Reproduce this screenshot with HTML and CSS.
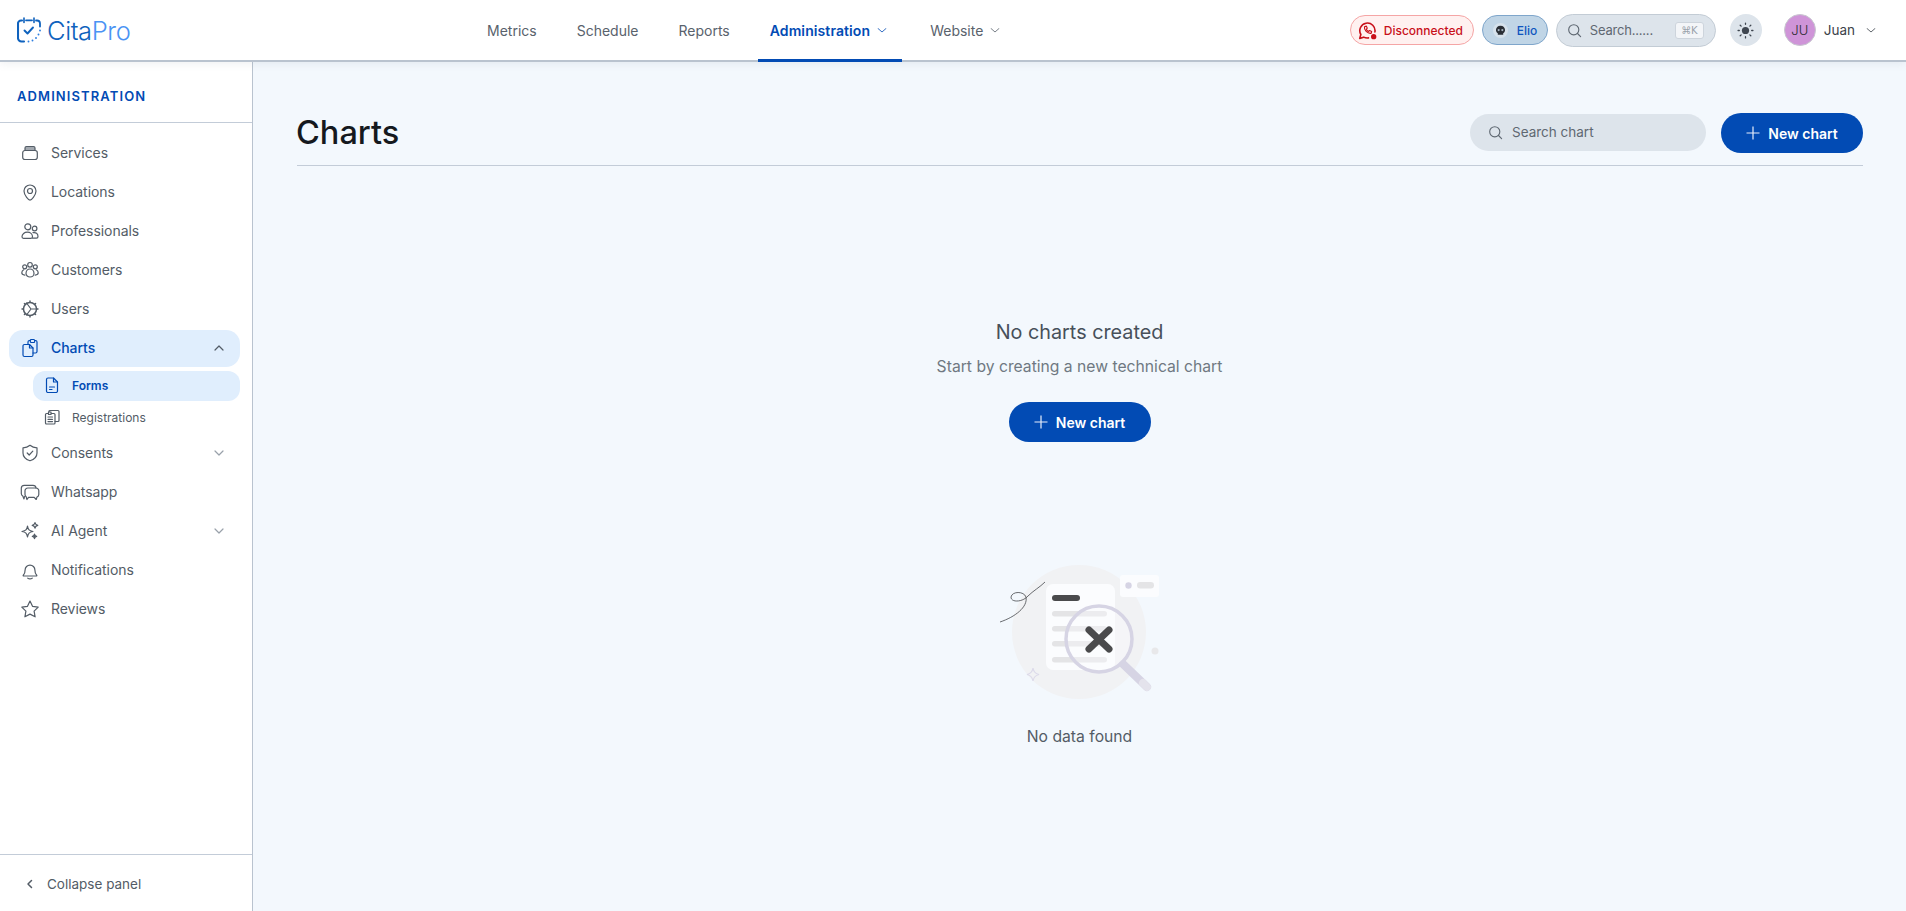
FILE: index.html
```html
<!DOCTYPE html>
<html lang="en">
<head>
    <meta charset="UTF-8">
    <meta name="viewport" content="width=device-width, initial-scale=1.0">
    <title>CitaPro - Charts</title>
    <link rel="stylesheet" href="styles.css">
</head>
<body>
    <header class="topbar">
        <a class="brand" href="#">
            <svg class="brand-icon" viewBox="0 0 24 26" fill="none" stroke="#0f62bd" stroke-width="2.100" stroke-linecap="round" stroke-linejoin="round">
                <path d="M5 3.500H4A3 3 0 0 0 1 6.500V21a3.500 3.500 0 0 0 3.500 3.500H7"/>
                <path d="M9 3.300h6M19 3.500h1A3 3 0 0 1 23 6.500v3" stroke-width="1.800"/>
                <path d="M7 1v4.500M17 1v4.500" stroke-width="1.600"/>
                <path d="M7.500 13.500l3 3 5.500-6" stroke-width="1.900"/>
                <path d="M11.500 24.500h.01M15.500 23.500h.01M19 21h.01M21.500 17.500h.01M23 13.500h.01" stroke-width="1.900" stroke="#2f7fe0"/>
            </svg>
            <span class="brand-name">Cita<span class="brand-pro">Pro</span></span>
        </a>
        <nav class="main-nav">
            <a class="main-link" href="#">Metrics</a>
            <a class="main-link" href="#">Schedule</a>
            <a class="main-link" href="#">Reports</a>
            <a class="main-link active" href="#">Administration
                <svg class="caret" viewBox="0 0 12 12" fill="none" stroke="currentColor" stroke-width="1" stroke-linecap="round" stroke-linejoin="round"><path d="M2 4.500L6 8l4-3.500"/></svg>
            </a>
            <a class="main-link" href="#">Website
                <svg class="caret" viewBox="0 0 12 12" fill="none" stroke="currentColor" stroke-width="1" stroke-linecap="round" stroke-linejoin="round"><path d="M2 4.500L6 8l4-3.500"/></svg>
            </a>
        </nav>
        <div class="top-actions">
            <span class="pill pill-off">
                <svg class="pill-icon" viewBox="0 0 20 20" fill="none" stroke="#c8101a" stroke-width="1.700" stroke-linecap="round" stroke-linejoin="round">
                    <path d="M11 17.800A8 8 0 0 1 6 17L1.800 18.300 3 14.200A8 8 0 1 1 17.800 11.500"/>
                    <path d="M6.800 6c-.6 3.500 3 7.500 7 7l.6-2-2.200-1-1 1c-1.100-.5-1.900-1.300-2.400-2.400l1-1-1-2.200z" stroke-width="1.200"/>
                    <circle cx="16.500" cy="16.500" r="2.800" fill="#c8101a" stroke="none"/>
                </svg>
                Disconnected
            </span>
            <span class="pill pill-agent">
                <span class="agent-face">
                    <svg viewBox="0 0 12 12"><path d="M6 1.500c-2.600 0-4.200 1.800-4.200 4 0 1.500.8 2.500 1.700 3v1.500h5V8.500c.9-.5 1.700-1.500 1.700-3 0-2.200-1.600-4-4.200-4z" fill="#2a2f36"/><circle cx="4.300" cy="5.600" r="1" fill="#a9b6c2"/><circle cx="7.700" cy="5.600" r="1" fill="#a9b6c2"/></svg>
                </span>
                Elio
            </span>
            <label class="top-search">
                <svg class="search-icon" viewBox="0 0 16 16" fill="none" stroke="currentColor" stroke-width="1.200" stroke-linecap="round"><circle cx="7.200" cy="7.200" r="5.400"/><path d="M11.200 11.200l3.300 3.300"/></svg>
                <span class="top-search-text">Search......</span>
                <kbd class="shortcut">⌘K</kbd>
            </label>
            <button class="theme-btn" type="button" aria-label="Theme">
                <svg viewBox="0 0 16 16" fill="#3f4650" stroke="#3f4650" stroke-width="1.200" stroke-linecap="round"><circle cx="8" cy="8" r="3.400" stroke="none"/><path d="M8 1v1.200M8 13.800V15M1 8h1.200M13.800 8H15M3 3l.9.9M12.100 12.100l.9.9M3 13l.9-.9M12.100 3.900L13 3"/></svg>
            </button>
            <div class="user">
                <span class="avatar">JU</span>
                <span class="user-name">Juan</span>
                <svg class="caret" viewBox="0 0 12 12" fill="none" stroke="currentColor" stroke-width="1" stroke-linecap="round" stroke-linejoin="round"><path d="M2 4.500L6 8l4-3.500"/></svg>
            </div>
        </div>
    </header>

    <div class="layout">
        <aside class="sidebar">
            <div class="side-title">ADMINISTRATION</div>
            <nav class="side-nav">
                <a class="side-item" href="#">
                    <svg class="side-icon" viewBox="0 0 20 20"><path d="M5 7.500V5a1.500 1.500 0 0 1 1.500-1.500h7A1.500 1.500 0 0 1 15 5v2.500z" fill="#a3a9b0"/><rect x="2.700" y="7.500" width="14.600" height="9" rx="2.200"/></svg>
                    Services
                </a>
                <a class="side-item" href="#">
                    <svg class="side-icon" viewBox="0 0 20 20"><path d="M10 18.200c-1 0-6-4.700-6-9.200a6 6 0 1 1 12 0c0 4.500-5 9.200-6 9.200z"/><circle cx="10" cy="9" r="2.500"/></svg>
                    Locations
                </a>
                <a class="side-item" href="#">
                    <svg class="side-icon" viewBox="0 0 20 20"><circle cx="7.800" cy="5.800" r="3"/><circle cx="14.600" cy="7.500" r="2.300"/><path d="M2 15.800c0-2.700 2.500-4.600 5.300-4.600 2.900 0 5.200 1.900 5.200 4.600 0 1-.6 1.500-1.500 1.500H3.500c-.9 0-1.500-.5-1.500-1.500z"/><path d="M13 11.700c2.800-.7 5 .9 5 3.700 0 1-.6 1.700-1.500 1.700h-4"/></svg>
                    Professionals
                </a>
                <a class="side-item" href="#">
                    <svg class="side-icon" viewBox="0 0 20 20"><circle cx="10" cy="4.800" r="2.300"/><circle cx="4.700" cy="6.800" r="2"/><circle cx="15.300" cy="6.800" r="2"/><path d="M6 13.500c0-2.600 1.800-4.500 4-4.500s4 1.900 4 4.500c0 2-1.800 3.500-4 3.500s-4-1.500-4-3.500z"/><path d="M3.700 9.800C2.500 10.400 1.800 11.500 1.800 12.800c0 1.200 1 2.100 3 2.300M16.300 9.800c1.200.6 1.900 1.700 1.900 3 0 1.200-1 2.100-3 2.300"/></svg>
                    Customers
                </a>
                <a class="side-item" href="#">
                    <svg class="side-icon" viewBox="0 0 20 20"><circle cx="10" cy="10" r="6.500" stroke-width="1.500"/><path d="M10 2v1.200M10 16.800V18M2 10h1.200M16.800 10H18M4.400 4.400l.9.9M14.700 14.700l.9.900M4.400 15.600l.9-.9M14.700 5.300l.9-.9" stroke-width="1.400"/><path d="M6.500 4L11 10l-4.500 6M11 10h5.500"/></svg>
                    Users
                </a>
                <a class="side-item active" href="#">
                    <svg class="side-icon" viewBox="0 0 20 20"><path d="M4.500 6.500h5L13 10v7a1.500 1.500 0 0 1-1.500 1.500h-7A1.500 1.500 0 0 1 3 17V8a1.500 1.500 0 0 1 1.500-1.500z"/><path d="M8 6.500V4A1.500 1.500 0 0 1 9.500 2.500h6A1.500 1.500 0 0 1 17 4v9.500a1.500 1.500 0 0 1-1.500 1.500H13"/><rect x="10.300" y="1.500" width="4.400" height="3" rx="1" fill="#e0eefd"/><path d="M9.500 6.500V10H13"/></svg>
                    Charts
                    <svg class="side-caret" viewBox="0 0 14 14"><path d="M3 9l4-4 4 4"/></svg>
                </a>
                <div class="side-sub">
                    <a class="sub-item active" href="#">
                        <svg class="sub-icon" viewBox="0 0 16 16"><path d="M2.500 2.500A1.500 1.500 0 0 1 4 1h5.500l4 4v9a1.500 1.500 0 0 1-1.500 1.500H4A1.500 1.500 0 0 1 2.500 14z"/><path d="M9.500 1v4h4M5.500 10h5M5.500 12.500h2.500"/></svg>
                        Forms
                    </a>
                    <a class="sub-item" href="#">
                        <svg class="sub-icon" viewBox="0 0 16 16"><rect x="1.500" y="4.500" width="9.500" height="10.500" rx="1"/><path d="M5 4.500V2.500a1 1 0 0 1 1-1h8a1 1 0 0 1 1 1V11.500a1 1 0 0 1-1 1h-3M4 8h4.500M4 10.300h4.500M4 12.600h4.500"/><rect x="4.500" y="3" width="2.500" height="2.500" fill="#fff"/></svg>
                        Registrations
                    </a>
                </div>
                <a class="side-item" href="#">
                    <svg class="side-icon" viewBox="0 0 20 20"><path d="M10 2.300c2 1.600 4.500 2.400 7 2.500V10c0 3.900-3 6.500-7 7.800C6 16.500 3 13.900 3 10V4.800c2.500-.1 5-.9 7-2.500z"/><path d="M7.200 10l2 2 3.600-3.800"/></svg>
                    Consents
                    <svg class="side-caret" viewBox="0 0 14 14"><path d="M3 5l4 4 4-4"/></svg>
                </a>
                <a class="side-item" href="#">
                    <svg class="side-icon" viewBox="0 0 20 20"><path d="M5 14.500H4.500L4 17l-1.200-3C1.900 13.500 1.300 12.600 1.300 11.500V6.300A3 3 0 0 1 4.300 3.300H13A3 3 0 0 1 16 6"/><path d="M8.500 6h7.500A2.800 2.800 0 0 1 18.800 8.800v3.700A2.800 2.800 0 0 1 17 15l-.8 2.500-2-2.200H8.500L7 17.500l-.8-2.700A2.800 2.800 0 0 1 5 12.500V8.800A2.800 2.800 0 0 1 7.800 6z"/></svg>
                    Whatsapp
                </a>
                <a class="side-item" href="#">
                    <svg class="side-icon" viewBox="0 0 20 20"><path d="M7.500 5c.6 3.800 1.700 4.900 5.500 5.500-3.800.6-4.900 1.700-5.500 5.500-.6-3.800-1.700-4.900-5.500-5.500C5.800 9.900 6.900 8.800 7.500 5z"/><path d="M15 1.500c.3 1.800.9 2.400 2.800 2.800-1.900.4-2.500 1-2.800 2.800-.3-1.800-.9-2.400-2.800-2.800 1.900-.4 2.500-1 2.800-2.800z"/><path d="M14.500 13c.3 1.500.8 2 2.200 2.300-1.400.3-1.900.8-2.200 2.300-.3-1.500-.8-2-2.200-2.300 1.400-.3 1.900-.8 2.200-2.300z" fill="currentColor"/></svg>
                    AI Agent
                    <svg class="side-caret" viewBox="0 0 14 14"><path d="M3 5l4 4 4-4"/></svg>
                </a>
                <a class="side-item" href="#">
                    <svg class="side-icon" viewBox="0 0 20 20"><path d="M3.300 15.200c1.300-1.200 1.800-2.500 1.800-5.200a4.900 4.900 0 0 1 9.800 0c0 2.700.5 4 1.800 5.200.3.300.1.800-.3.800H3.600c-.4 0-.6-.5-.3-.8z"/><path d="M7.800 18.200c.6.400 1.400.6 2.200.6s1.600-.2 2.200-.6"/></svg>
                    Notifications
                </a>
                <a class="side-item" href="#">
                    <svg class="side-icon" viewBox="0 0 20 20"><path d="M10 2l2.500 5.300 5.700.8-4.100 4 1 5.700-5.100-2.700-5.100 2.700 1-5.700-4.100-4 5.700-.8z"/></svg>
                    Reviews
                </a>
            </nav>
            <a class="collapse" href="#">
                <svg class="collapse-icon" viewBox="0 0 12 12"><path d="M7.500 2.500L4 6l3.500 3.500"/></svg>
                Collapse panel
            </a>
        </aside>

        <main class="content">
            <div class="page-head">
                <h1 class="page-title">Charts</h1>
                <label class="chart-search">
                    <svg class="search-icon" viewBox="0 0 16 16" fill="none" stroke="currentColor" stroke-width="1.200" stroke-linecap="round"><circle cx="7.200" cy="7.200" r="5.400"/><path d="M11.200 11.200l3.300 3.300"/></svg>
                    <span>Search chart</span>
                </label>
                <button class="primary-btn" type="button">
                    <svg class="plus" viewBox="0 0 14 14"><path d="M7 .5v13M.5 7h13"/></svg>
                    New chart
                </button>
            </div>

            <section class="empty">
                <h2 class="empty-title">No charts created</h2>
                <p class="empty-text">Start by creating a new technical chart</p>
                <button class="primary-btn" type="button">
                    <svg class="plus" viewBox="0 0 14 14"><path d="M7 .5v13M.5 7h13"/></svg>
                    New chart
                </button>
                <svg class="empty-art" viewBox="40 25 160 135" fill="none">
                    <circle cx="119" cy="93" r="67" fill="#f1f2f4"/>
                    <rect x="86" y="45" width="69" height="86" rx="7" fill="#fbfcfe"/>
                    <rect x="92" y="56" width="28" height="6" rx="3" fill="#4a4a4c"/>
                    <rect x="92" y="72" width="55" height="5.500" rx="2.700" fill="#e4e4e6"/>
                    <rect x="92" y="87" width="55" height="5.500" rx="2.700" fill="#e4e4e6"/>
                    <rect x="92" y="102" width="55" height="5.500" rx="2.700" fill="#e4e4e6"/>
                    <rect x="92" y="118" width="55" height="5.500" rx="2.700" fill="#e4e4e6"/>
                    <path d="M163 125l24 23" stroke="#d6d4e4" stroke-width="8" stroke-linecap="round"/>
                    <path d="M183 144l4 4" stroke="#e4e3ec" stroke-width="8" stroke-linecap="round"/>
                    <circle cx="139" cy="100" r="33" fill="#fbfcfe" fill-opacity=".35" stroke="#d6d4e4" stroke-width="3.500"/>
                    <path d="M129 91l20 19M149 91l-20 19" stroke="#4a4a4c" stroke-width="7" stroke-linecap="round"/>
                    <rect x="160" y="36" width="39" height="22" rx="3" fill="#fbfcfe"/>
                    <circle cx="168.500" cy="46.500" r="3.200" fill="#d6d4e4"/>
                    <rect x="177" y="43" width="17" height="6.500" rx="3.200" fill="#e4e4e6"/>
                    <circle cx="195" cy="112" r="3.500" fill="#e8e8ea"/>
                    <path d="M73 129c.6 4 2 5.500 6 6.500-4 1-5.400 2.500-6 6.500-.6-4-2-5.500-6-6.500 4-1 5.400-2.500 6-6.500z" stroke="#dcdaea" stroke-width="1.200"/>
                    <path d="M40 83C55 78 68 68 66 58 64 52 52 52 51 58 51 64 63 63 68 57 73 52 80 48 85 43" stroke="#45474b" stroke-width=".8"/>
                </svg>
                <p class="empty-note">No data found</p>
            </section>
        </main>
    </div>
</body>
</html>
```

FILE: styles.css
```css
* {
    box-sizing: border-box;
}

html,
body {
    height: 100%;
}

body {
    margin: 0;
    display: flex;
    flex-direction: column;
    overflow: hidden;
    font-family: "Inter", "Noto Sans", sans-serif;
    color: #535c66;
    background: #f3f8fd;
}

a {
    color: inherit;
    text-decoration: none;
}

/* top bar */
.topbar {
    position: relative;
    z-index: 1;
    display: flex;
    align-items: stretch;
    flex: none;
    height: 62px;
    padding: 0 29px 0 17px;
    background: #fff;
    border-bottom: 2px solid #b9c3cf;
    box-shadow: 0 2px 8px rgba(100, 116, 139, .1);
}

.brand {
    display: flex;
    align-items: center;
    gap: 6px;
    width: 458px;
}

.brand-icon {
    width: 24px;
    height: 26px;
}

.brand-name {
    font-size: 25.500px;
    font-weight: 300;
    color: #0f62bd;
    letter-spacing: -0.4px;
}

.brand-pro {
    color: #4a93f4;
}

.main-nav {
    display: flex;
    gap: 16px;
    margin-bottom: -2px;
}

.main-link {
    display: flex;
    align-items: center;
    gap: 6px;
    padding: 1px 12px 0;
    font-size: 14px;
    color: #59626c;
    border-bottom: 3px solid transparent;
}

.main-link.active {
    font-weight: 600;
    letter-spacing: .1px;
    color: #024bb4;
    border-bottom-color: #024bb4;
}

.main-link .caret {
    margin-right: 2px;
}

.caret {
    width: 12px;
    height: 12px;
    flex: none;
    opacity: .8;
}

.top-actions {
    display: flex;
    align-items: center;
    margin-left: auto;
}

.pill {
    display: flex;
    align-items: center;
    height: 30px;
    border-radius: 15px;
    font-size: 12px;
    font-weight: 500;
}

.pill-off {
    gap: 7px;
    width: 124px;
    padding-left: 7px;
    color: #c8101a;
    background: #fff1f0;
    border: 1px solid #f5a5a5;
}

.pill-icon {
    width: 19px;
    height: 19px;
    flex: none;
}

.pill-agent {
    gap: 9px;
    width: 66px;
    margin-left: 8px;
    padding-left: 10px;
    color: #0f55bf;
    background: #c0d5e6;
    border: 1px solid #7fa6cb;
}

.agent-face {
    display: flex;
    align-items: center;
    justify-content: center;
    width: 15px;
    height: 15px;
    background: #d6e2ec;
    border-radius: 50%;
}

.agent-face svg {
    width: 13px;
    height: 13px;
}

.top-search {
    display: flex;
    align-items: center;
    width: 160px;
    height: 33px;
    margin-left: 8px;
    padding: 0 11px 0 10px;
    font-size: 13px;
    letter-spacing: -0.2px;
    color: #5f6872;
    background: #dde4eb;
    border: 1px solid #c3ccd5;
    border-radius: 17px;
}

.search-icon {
    width: 15px;
    height: 15px;
    flex: none;
}

.top-search-text {
    margin-left: 8px;
}

.shortcut {
    display: flex;
    align-items: center;
    justify-content: center;
    width: 29px;
    height: 17px;
    margin-left: auto;
    font-family: "DejaVu Sans", sans-serif;
    font-size: 10px;
    color: #9aa2ab;
    background: #f3f5f8;
    border: 1px solid #cdd4dc;
    border-radius: 3px;
}

.theme-btn {
    display: flex;
    align-items: center;
    justify-content: center;
    width: 32px;
    height: 32px;
    margin-left: 14px;
    padding: 0;
    background: #dde4eb;
    border: 0;
    border-radius: 50%;
}

.theme-btn svg {
    width: 17px;
    height: 17px;
}

.user {
    display: flex;
    align-items: center;
    margin-left: 22px;
    font-size: 13.500px;
    color: #3b424a;
}

.avatar {
    display: flex;
    align-items: center;
    justify-content: center;
    width: 32px;
    height: 32px;
    border: 1px solid #c8c8d0;
    border-radius: 50%;
    font-size: 13px;
    font-weight: 300;
    color: #2b2b2f;
    background: #cf94d8;
}

.user-name {
    margin: 0 10px 0 8px;
}

/* page layout */
.layout {
    display: flex;
    flex: 1;
    min-height: 0;
}

.sidebar {
    display: flex;
    flex-direction: column;
    flex: none;
    width: 253px;
    background: #fff;
    border-right: 1px solid #b9c3cf;
}

.side-title {
    height: 61px;
    padding: 25px 0 0 17px;
    font-size: 13px;
    font-weight: 600;
    letter-spacing: 1.100px;
    line-height: 18px;
    color: #024bb4;
    border-bottom: 1px solid #c3ccd8;
}

.side-nav {
    display: flex;
    flex-direction: column;
    gap: 2px;
    flex: 1;
    padding-top: 12px;
}

.side-item {
    display: flex;
    align-items: center;
    gap: 11px;
    flex: none;
    height: 37px;
    margin: 0 12px 0 9px;
    padding: 0 14px 2px 11px;
    font-size: 14px;
    letter-spacing: -0.05px;
    border-radius: 14px;
}

.side-item.active {
    font-weight: 500;
    color: #024bb4;
    background: #e0eefd;
}

.side-icon,
.sub-icon {
    flex: none;
    fill: none;
    stroke: currentColor;
    stroke-width: 1.200;
    stroke-linecap: round;
    stroke-linejoin: round;
}

.side-icon {
    width: 20px;
    height: 20px;
}

.side-caret {
    width: 14px;
    height: 14px;
    margin-left: auto;
    fill: none;
    stroke: #99a1aa;
    stroke-width: 1.200;
    stroke-linecap: round;
    stroke-linejoin: round;
}

.side-item.active .side-caret {
    stroke: #535c66;
}

.side-sub {
    display: flex;
    flex-direction: column;
    gap: 2px;
    padding-top: 2px;
}

.sub-item {
    display: flex;
    align-items: center;
    gap: 12px;
    height: 30px;
    margin: 0 12px 0 33px;
    padding: 0 0 2px 11px;
    font-size: 12px;
    border-radius: 12px;
}

.sub-item.active {
    font-weight: 600;
    color: #024bb4;
    background: #e0eefd;
}

.sub-icon {
    width: 16px;
    height: 16px;
}

.collapse {
    display: flex;
    align-items: center;
    gap: 11px;
    flex: none;
    height: 57px;
    padding: 2px 0 0 24px;
    font-size: 13.500px;
    border-top: 1px solid #c3ccd8;
}

.collapse-icon {
    width: 12px;
    height: 12px;
    fill: none;
    stroke: #535c66;
    stroke-width: 1.500;
    stroke-linecap: round;
    stroke-linejoin: round;
}

/* content */
.content {
    flex: 1;
    min-width: 0;
}

.page-head {
    display: flex;
    align-items: center;
    margin: 0 43px 0 44px;
    padding: 51px 0 12px;
    border-bottom: 1px solid #c3ccd8;
}

.page-title {
    margin: 0 auto 0 -1px;
    font-size: 32.500px;
    font-weight: 500;
    line-height: 40px;
    color: #15191e;
}

.chart-search {
    display: flex;
    align-items: center;
    gap: 9px;
    width: 236px;
    height: 37px;
    margin: 0 15px 1px 0;
    padding: 0 0 1px 18px;
    font-size: 13.500px;
    color: #5f6872;
    background: #dde4eb;
    border-radius: 19px;
}

.primary-btn {
    display: inline-flex;
    align-items: center;
    justify-content: center;
    gap: 8px;
    flex: none;
    width: 142px;
    height: 40px;
    padding: 0;
    font-family: inherit;
    font-size: 14px;
    font-weight: 600;
    color: #fff;
    background: #024bb4;
    border: 0;
    border-radius: 20px;
}

.plus {
    width: 14px;
    height: 14px;
    fill: none;
    stroke: #e8eefb;
    stroke-width: 1.200;
}

.empty {
    display: flex;
    flex-direction: column;
    align-items: center;
    padding-top: 154px;
}

.empty-title {
    margin: 0;
    font-size: 19.800px;
    font-weight: 400;
    line-height: 24px;
    color: #47505a;
}

.empty-text {
    margin: 12px 0 24px;
    font-size: 15.700px;
    line-height: 22px;
    color: #6f7882;
}

.empty-art {
    width: 160px;
    height: 135px;
    margin-top: 122px;
}

.empty-note {
    margin: 26px 0 0;
    font-size: 15.700px;
    line-height: 24px;
    color: #535c66;
}
```
